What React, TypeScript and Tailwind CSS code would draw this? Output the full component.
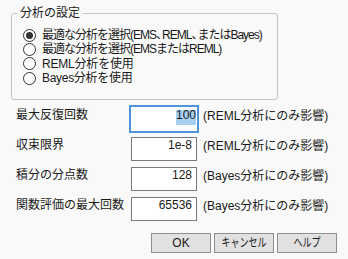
import React from "react";

function Radio({
  checked,
  children,
  track,
}: {
  checked?: boolean;
  children: React.ReactNode;
  track: string;
}) {
  return (
    <div className="flex items-center h-[14.33px]">
      <div className="w-[13px] h-[13px] rounded-full border border-[#333333] bg-white flex items-center justify-center shrink-0">
        {checked && <div className="w-[7px] h-[7px] rounded-full bg-[#333333]" />}
      </div>
      <span className={"ml-[6px] leading-[14px] whitespace-nowrap " + track}>{children}</span>
    </div>
  );
}

function Field({
  label,
  value,
  note,
  focused,
}: {
  label: string;
  value: string;
  note: string;
  focused?: boolean;
}) {
  return (
    <div className="flex items-start h-[30px]">
      <div className="w-[115px] leading-[23px] whitespace-nowrap">{label}</div>
      {focused ? (
        <div className="mt-[3px] w-[66px] h-[24px] bg-white border border-white shadow-[0_0_0_2px_#4f94dd] flex justify-end items-start">
          <span className="mt-[2px] h-[15px] leading-[11px] bg-[#a6cff2]">{value}</span>
        </div>
      ) : (
        <div className="mt-[3px] w-[66px] h-[24px] bg-white border border-[#7a7a7a] flex justify-end items-start pr-[4px]">
          <span className="mt-[2px] h-[15px] leading-[11px]">{value}</span>
        </div>
      )}
      <div className="ml-[6px] leading-[24px] whitespace-nowrap">{note}</div>
    </div>
  );
}

function Btn({ children }: { children: React.ReactNode }) {
  return (
    <div className="w-[60px] h-[20px] bg-[#e1e1e1] border border-[#8f8f8f] flex items-center justify-center leading-[18px] whitespace-nowrap">
      {children}
    </div>
  );
}

export default function App() {
  return (
    <div className="w-[348px] h-[259px] bg-[#f9f9f9] text-[12px] text-[#1a1a1a] overflow-hidden font-['Liberation_Sans','Noto_Sans_CJK_JP',sans-serif]">
      <div className="pl-[11px] pt-[13px]">
        <div className="relative w-[267px] h-[87px] border border-[#c4c4c4] rounded-[3px] pt-[14px] pl-[11px]">
          <span className="absolute left-[5px] top-[-8px] px-[3px] bg-[#f9f9f9] leading-[14px]">
            分析の設定
          </span>
          <Radio checked track="tracking-[-1px]">
            最適な分析を選択(EMS<span className="tracking-[-6px]">、</span>REML
            <span className="tracking-[-6px]">、</span>またはBayes)
          </Radio>
          <Radio track="tracking-[-1px]">最適な分析を選択(EMSまたはREML)</Radio>
          <Radio track="tracking-[-0.2px]">REML分析を使用</Radio>
          <Radio track="tracking-[-0.3px]">Bayes分析を使用</Radio>
        </div>
      </div>
      <div className="pl-[16px] mt-[4px] flex flex-col">
        <Field label="最大反復回数" value="100" note="(REML分析にのみ影響)" focused />
        <Field label="収束限界" value="1e-8" note="(REML分析にのみ影響)" />
        <Field label="積分の分点数" value="128" note="(Bayes分析にのみ影響)" />
        <Field label="関数評価の最大回数" value="65536" note="(Bayes分析にのみ影響)" />
      </div>
      <div className="flex justify-end gap-[3px] pr-[11px] mt-[9px]">
        <Btn>OK</Btn>
        <Btn>
          <span className="inline-block scale-x-75">キャンセル</span>
        </Btn>
        <Btn>
          <span className="inline-block scale-x-75">ヘルプ</span>
        </Btn>
      </div>
    </div>
  );
}
